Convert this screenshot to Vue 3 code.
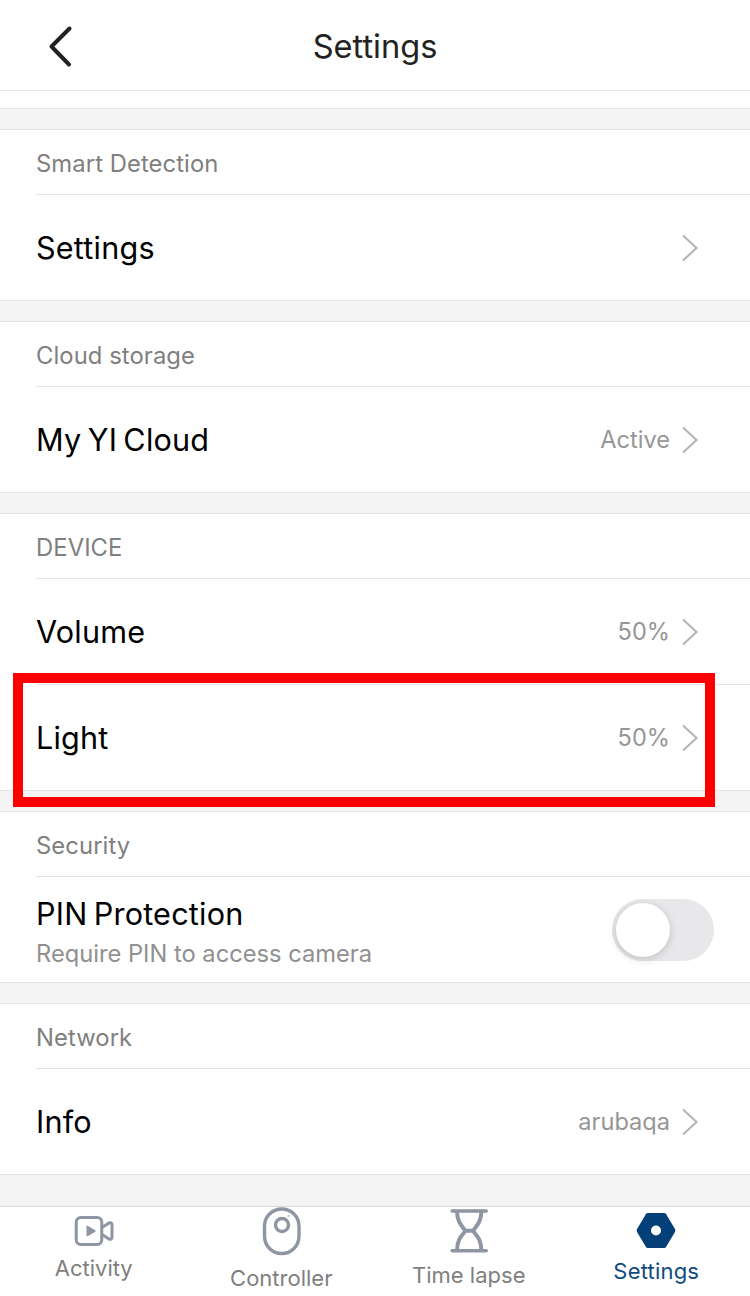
<script setup>
const groups = [
  { label: 'Smart Detection', rows: [{ name: 'Settings', chevron: true }] },
  { label: 'Cloud storage', rows: [{ name: 'My YI Cloud', value: 'Active', chevron: true }] },
  { label: 'DEVICE', rows: [
    { name: 'Volume', value: '50%', chevron: true },
    { name: 'Light', value: '50%', chevron: true, highlighted: true }
  ] },
  { label: 'Security', rows: [{ name: 'PIN Protection', sub: 'Require PIN to access camera', toggle: true }] },
  { label: 'Network', rows: [{ name: 'Info', value: 'arubaqa', chevron: true }] }
]
</script>

<template>
  <div class="page">
    <header class="nav">
      <svg class="back" width="30" height="44" viewBox="0 0 30 44">
        <path d="M23.5 3.5 L5.5 21.5 L23 39.5" fill="none" stroke="#222" stroke-width="4" stroke-linecap="round" stroke-linejoin="round" />
      </svg>
      <h1>Settings</h1>
    </header>
    <main class="content">
      <section v-for="g in groups" :key="g.label" class="group">
        <div class="label"><span>{{ g.label }}</span></div>
        <div v-for="r in g.rows" :key="r.name" class="row">
          <div class="text" :class="{ double: r.sub }">
            <div class="name">{{ r.name }}</div>
            <div v-if="r.sub" class="sub">{{ r.sub }}</div>
          </div>
          <span v-if="r.value" class="value">{{ r.value }}</span>
          <svg v-if="r.chevron" class="chev" width="18" height="28" viewBox="0 0 18 28">
            <path d="M2 1.5 L15.5 14 L2 26.5" fill="none" stroke="#b6b6b6" stroke-width="2.2" />
          </svg>
          <div v-if="r.toggle" class="switch"><div class="knob"></div></div>
          <div v-if="r.highlighted" class="redbox"></div>
        </div>
      </section>
    </main>
    <nav class="tabs">
      <div class="tab t1">
        <svg width="40" height="32" viewBox="0 0 40 32">
          <rect x="2.25" y="2.5" width="25.5" height="27" rx="4.5" fill="none" stroke="#8f96a3" stroke-width="3" />
          <path d="M12.5 11.5 Q12.5 10 14 11 L21 15 Q22.5 16 21 17 L14 21 Q12.5 22 12.5 20.5 Z" fill="#8f96a3" />
          <path d="M28 12.5 L35 8 Q38 7 38 10 V22 Q38 25 35 24 L28 19.5" fill="none" stroke="#8f96a3" stroke-width="3" stroke-linejoin="round" />
        </svg>
        <span>Activity</span>
      </div>
      <div class="tab t2">
        <svg width="42" height="50" viewBox="0 0 42 50">
          <rect x="4.5" y="2" width="34.5" height="44.5" rx="17.2" fill="none" stroke="#8f96a3" stroke-width="3.4" />
          <circle cx="22" cy="18" r="6.5" fill="none" stroke="#8f96a3" stroke-width="3.4" />
          <circle cx="28.5" cy="9" r="1" fill="#b3b8c1" />
        </svg>
        <span>Controller</span>
      </div>
      <div class="tab t3">
        <svg width="40" height="46" viewBox="0 0 40 46">
          <path d="M3.2 2 H37.2 M3.2 41.7 H37.2" fill="none" stroke="#8f96a3" stroke-width="3.6" stroke-linecap="round" />
          <path d="M8 2 C8 13 13 17 16.5 21.8 M32.4 2 C32.4 13 27.4 17 23.9 21.8 M8 41.7 C8 30 13 26.5 16.5 21.8 M32.4 41.7 C32.4 30 27.4 26.5 23.9 21.8 M16.5 21.8 H23.9" fill="none" stroke="#8f96a3" stroke-width="4" stroke-linejoin="round" />
        </svg>
        <span>Time lapse</span>
      </div>
      <div class="tab t4">
        <svg width="40" height="36" viewBox="0 0 40 36">
          <path fill-rule="evenodd" d="M11.5 0 H28.5 Q29.5 0 30 1 L39 16 Q39.8 17.5 39 19 L30 34 Q29.5 35 28.5 35 H11.5 Q10.5 35 10 34 L1 19 Q0.2 17.5 1 16 L10 1 Q10.5 0 11.5 0 Z M20 12.5 A5 5 0 1 0 20 22.5 A5 5 0 1 0 20 12.5 Z" fill="#053f77" />
        </svg>
        <span>Settings</span>
      </div>
    </nav>
  </div>
</template>

<style>
html, body { margin: 0; background: #fff; }
</style>

<style scoped>
.page { width: 750px; height: 1296px; display: flex; flex-direction: column; background: #f4f4f4; font-family: Inter, "Liberation Sans", sans-serif; overflow: hidden; }
.nav { height: 90px; flex: none; position: relative; display: flex; align-items: center; justify-content: center; background: #fff; border-bottom: 1px solid #e6e6e6; }
.nav h1 { margin: 2px 0 0; font-size: 32.6px; font-weight: 400; color: #222; }
.back { position: absolute; left: 46px; top: 25px; }
.content { flex: 1; display: flex; flex-direction: column; gap: 20px; padding-top: 38px; position: relative; }
.content::before { content: ""; position: absolute; left: 0; right: 0; top: 0; height: 17px; background: #fff; border-bottom: 1px solid #e4e4e4; }
.group { position: relative; background: #fff; border-top: 1px solid #e4e4e4; border-bottom: 1px solid #e4e4e4; }
.label { margin-left: 36px; padding-top: 2px; box-sizing: border-box; height: 65px; border-bottom: 1px solid #e4e4e4; display: flex; align-items: center; font-size: 23.8px; letter-spacing: 0.08px; color: #808080; }
.row { position: relative; height: 105px; margin-left: 36px; padding-right: 51px; display: flex; align-items: center; border-bottom: 1px solid #e4e4e4; }
.row:last-child { border-bottom: none; }
.text { flex: 1; }
.text.double { padding-top: 5px; }
.name { font-size: 30.6px; letter-spacing: 0.2px; word-spacing: -2.5px; color: #000; line-height: 36px; }
.sub { font-size: 23.7px; color: #909090; line-height: 30px; margin-top: 7px; }
.value { font-size: 23.6px; color: #969696; margin-right: 11px; }
.switch { width: 102px; height: 62px; margin-right: -15px; border-radius: 31px; background: #e8e8ea; position: relative; }
.knob { position: absolute; left: 4px; top: 4px; width: 54px; height: 54px; border-radius: 50%; background: #fff; box-shadow: 0 2px 8px rgba(0,0,0,.18); }
.redbox { position: absolute; left: -23px; top: -12px; width: 682px; height: 114px; border: 10px solid #fe0000; pointer-events: none; }
.tabs { height: 89px; flex: none; position: relative; background: #fff; border-top: 1px solid #d9d9d9; display: grid; grid-template-columns: repeat(4, 187.5px); }
.tab { display: flex; flex-direction: column; align-items: center; font-size: 22px; color: #7f7f7f; }
.t1 { padding-top: 8px; }
.t1 span { margin-top: 8px; }
.t2 { padding-top: 0; }
.t2 span { margin-top: 8px; }
.t3 { padding-top: 2px; }
.t3 span { margin-top: 7px; }
.t4 { padding-top: 6px; color: #0e4a80; letter-spacing: 0.2px; }
.t4 span { margin-top: 9px; }
</style>
